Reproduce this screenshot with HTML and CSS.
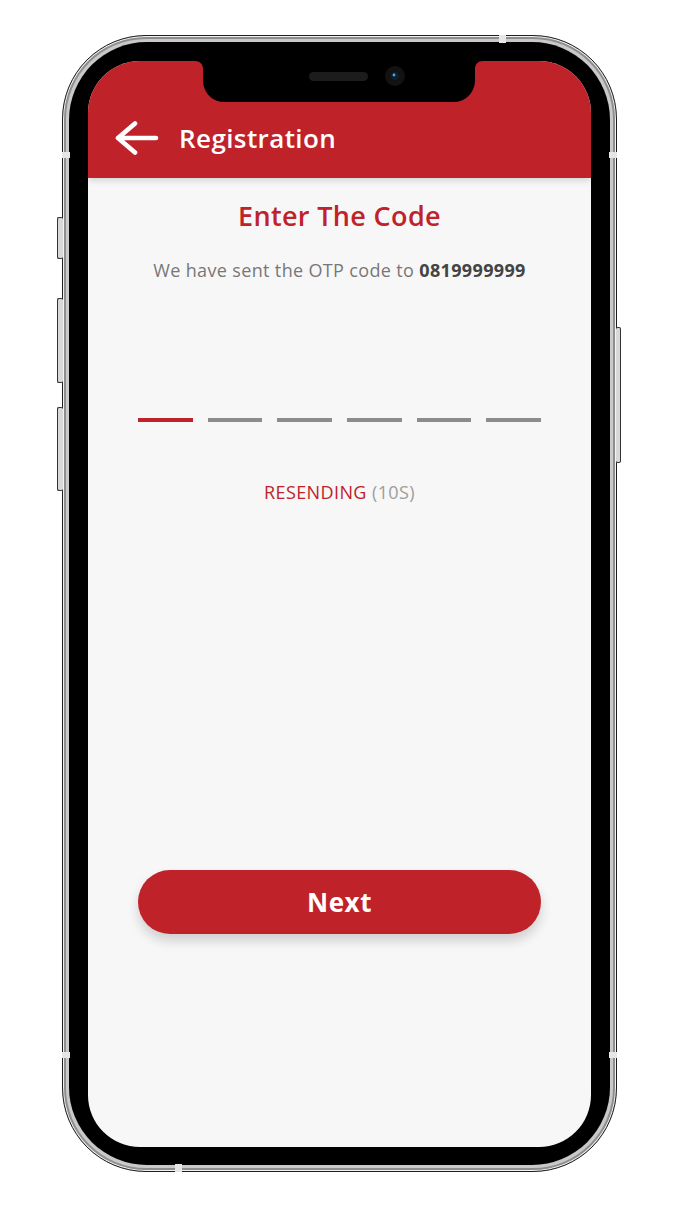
FILE: index.html
```html
<!DOCTYPE html>
<html lang="en">
<head>
<meta charset="utf-8">
<title>Registration</title>
<link rel="stylesheet" href="styles.css">
</head>
<body>
<div class="phone">
  <span class="side-btn left b1"></span>
  <span class="side-btn left b2"></span>
  <span class="side-btn left b3"></span>
  <span class="side-btn right b4"></span>
  <span class="mark mt"></span>
  <span class="mark mb"></span>
  <span class="mark ml1"></span>
  <span class="mark ml2"></span>
  <span class="mark mr1"></span>
  <span class="mark mr2"></span>
  <div class="bezel">
    <div class="screen">
      <svg class="notch" width="288" height="41" viewBox="0 0 288 41">
        <path d="M0 0 H288 C283 0 280 3 280 8 V19 C280 31 271 41 259 41 H29 C17 41 8 31 8 19 V8 C8 3 5 0 0 0 Z" fill="#000"/>
        <rect x="114" y="11" width="59" height="9" rx="4.5" fill="#1c1c1c"/>
        <circle cx="200" cy="15" r="10" fill="#121212"/>
        <circle cx="200" cy="15" r="4" fill="#0d1f2e"/>
        <circle cx="199" cy="14" r="1.4" fill="#5fa0d8"/>
      </svg>
      <header class="appbar">
        <svg class="back" width="44" height="36" viewBox="0 0 44 36">
          <path d="M3 17 H41 M3 17 L20 2.5 M3 17 L20 31.5" fill="none" stroke="#fff" stroke-width="4.6" stroke-linecap="round" stroke-linejoin="round"/>
        </svg>
        <h1 class="appbar-title">Registration</h1>
      </header>
      <main class="content">
        <h2 class="title">Enter The Code</h2>
        <p class="subtitle">We have sent the OTP code to <b>0819999999</b></p>
        <div class="otp">
          <span class="dash active"></span>
          <span class="dash"></span>
          <span class="dash"></span>
          <span class="dash"></span>
          <span class="dash"></span>
          <span class="dash"></span>
        </div>
        <p class="resend"><span class="resend-label">RESENDING</span> <span class="resend-time">(10S)</span></p>
        <button class="next-btn" type="button">Next</button>
      </main>
    </div>
  </div>
</div>
</body>
</html>
```
FILE: styles.css
```css
* { box-sizing: border-box; }
html, body { margin: 0; }
body {
  width: 678px;
  height: 1208px;
  background: #ffffff;
  padding: 35px 0 0 62px;
  font-family: "Open Sans", "Noto Sans", sans-serif;
  overflow: hidden;
}
.phone {
  position: relative;
  width: 555px;
  height: 1137px;
  border: 1px solid #1e1e1e;
  border-radius: 84px;
  padding: 6px;
  background: #bdbdbd;
  box-shadow: inset 0 0 0 1px #f2f2f2, inset 0 0 0 3px #8e8e8e, inset 0 0 0 6px #c9c9c9;
}
.bezel {
  width: 100%;
  height: 100%;
  background: #000;
  border-radius: 78px;
  padding: 19px 18px 18px 19px;
}
.screen {
  position: relative;
  width: 503px;
  height: 1086px;
  border-radius: 52px;
  overflow: hidden;
  background: #f7f7f7;
  display: flex;
  flex-direction: column;
}
.notch {
  position: absolute;
  top: 0;
  left: 107px;
  z-index: 3;
}
.appbar {
  height: 117px;
  padding-top: 41px;
  background: #c0222a;
  display: flex;
  align-items: center;
  gap: 20px;
  padding-left: 27px;
  box-shadow: 0 2px 7px rgba(0,0,0,0.16);
  position: relative;
  z-index: 2;
  flex-shrink: 0;
}
.back { display: block; margin-top: -3px; }
.appbar-title {
  margin: 0;
  color: #fff;
  font-size: 26px;
  font-weight: 600;
  letter-spacing: 0.4px;
  line-height: 30px;
  margin-top: -4px;
}
.content {
  padding: 22px 50px 0;
  display: flex;
  flex-direction: column;
  align-items: stretch;
}
.title {
  margin: 0;
  text-align: center;
  color: #c0222a;
  font-size: 27px;
  font-weight: 600;
  letter-spacing: 0.35px;
  line-height: 32px;
}
.subtitle {
  margin: 26px 0 0;
  text-align: center;
  color: #777;
  font-size: 18px;
  letter-spacing: 0.35px;
  line-height: 24px;
}
.subtitle b { color: #444; font-weight: 700; }
.otp {
  margin-top: 136px;
  display: flex;
  gap: 15px;
}
.dash {
  flex: 1;
  height: 4px;
  background: #8c8c8c;
}
.dash.active { background: #c0222a; }
.resend {
  margin: 58px 0 0;
  text-align: center;
  font-size: 18px;
  letter-spacing: 0.4px;
  line-height: 24px;
}
.resend-label { color: #c0222a; }
.resend-time { color: #9e9e9e; }
.next-btn {
  margin-top: 366px;
  height: 64px;
  border: none;
  border-radius: 32px;
  background: #c0222a;
  color: #fff;
  font-family: inherit;
  font-size: 26px;
  font-weight: 700;
  letter-spacing: 0.6px;
  box-shadow: 0 7px 12px rgba(0,0,0,0.16);
}
.side-btn {
  position: absolute;
  width: 6px;
  background: #d8d8d8;
  border: 1px solid #333;
  border-radius: 2px;
}
.side-btn.left { left: -6px; border-right: none; }
.side-btn.right { right: -5px; width: 5px; border-left: none; }
.b1 { top: 181px; height: 42px; }
.b2 { top: 262px; height: 85px; }
.b3 { top: 371px; height: 84px; }
.b4 { top: 291px; height: 136px; }
.mark {
  position: absolute;
  background: #e6e6e6;
}
.mt { top: -1px; left: 436px; width: 7px; height: 8px; }
.mb { bottom: -1px; left: 112px; width: 7px; height: 8px; }
.ml1 { left: -1px; top: 116px; width: 8px; height: 6px; }
.ml2 { left: -1px; top: 1016px; width: 8px; height: 6px; }
.mr1 { right: -1px; top: 116px; width: 8px; height: 6px; }
.mr2 { right: -1px; top: 1016px; width: 8px; height: 6px; }
```
